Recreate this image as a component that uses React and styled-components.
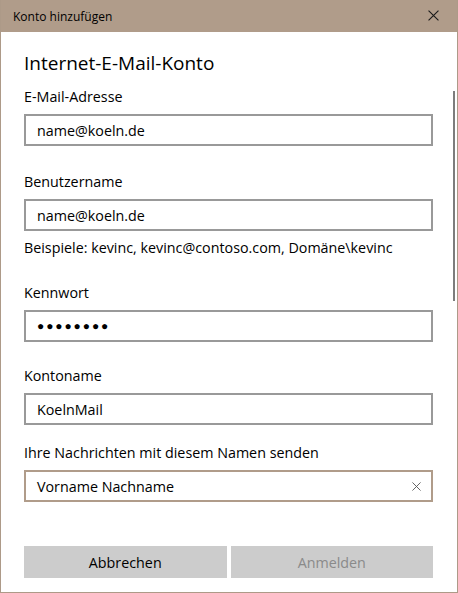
import styled, { createGlobalStyle } from "styled-components";

const GlobalStyle = createGlobalStyle`
	* {
		box-sizing: border-box;
	}
	body {
		margin: 0;
		background: #ffffff;
		font-family: "Open Sans", "Noto Sans", sans-serif;
	}
`;

const Window = styled.div`
	position: relative;
	width: 458px;
	height: 593px;
	display: flex;
	flex-direction: column;
	border: 1px solid #ad9a88;
	border-top: none;
	background: #ffffff;
	overflow: hidden;
`;

const TitleBar = styled.div`
	height: 32px;
	margin: 0 -1px;
	padding: 0 18px 0 13px;
	display: flex;
	align-items: center;
	justify-content: space-between;
	background: #b09c8a;
	color: #000000;
	font-size: 12px;
`;

const CloseButton = styled.button`
	border: none;
	background: transparent;
	padding: 0;
	width: 12px;
	height: 12px;
	display: flex;
	cursor: pointer;
`;

const Content = styled.div`
	flex: 1;
	display: flex;
	flex-direction: column;
	padding: 17px 24px 0 23px;
`;

const Heading = styled.h1`
	margin: 0;
	font-size: 19px;
	line-height: 28px;
	font-weight: 400;
	color: #000000;
`;

const Field = styled.div`
	display: flex;
	flex-direction: column;
	margin-top: ${({ $top }) => $top}px;
`;

const Label = styled.label`
	font-size: 14.3px;
	line-height: 20px;
	color: #000000;
	margin-bottom: 7px;
`;

const InputBox = styled.div`
	height: 32px;
	display: flex;
	align-items: center;
	padding: 0 10px 0 11px;
	border: 2px solid ${({ $focused }) => ($focused ? "#b09c8a" : "#999999")};
	font-size: 14.3px;
	color: #000000;
`;

const Value = styled.span`
	flex: 1;
	white-space: nowrap;
`;

const Dots = styled.span`
	flex: 1;
	font-size: 12px;
	letter-spacing: 1.9px;
	line-height: 1;
`;

const Hint = styled.div`
	margin-top: 7px;
	font-size: 14.3px;
	line-height: 20px;
	color: #000000;
`;

const Buttons = styled.div`
	margin-top: auto;
	margin-bottom: 14px;
	display: grid;
	grid-template-columns: 1fr 1fr;
	gap: 4px;
`;

const Button = styled.button`
	height: 32px;
	border: none;
	background: #cccccc;
	font-family: inherit;
	font-size: 14.3px;
	color: ${({ disabled }) => (disabled ? "#8a8a8a" : "#000000")};
	cursor: ${({ disabled }) => (disabled ? "default" : "pointer")};
`;

const ScrollThumb = styled.div`
	position: absolute;
	left: 452px;
	top: 91px;
	width: 2px;
	height: 210px;
	background: #7d7d7d;
`;

const XIcon = ({ size, color, width }) => (
	<svg width={size} height={size} viewBox="0 0 10 10" fill="none">
		<path d="M0.5 0.5 L9.5 9.5 M9.5 0.5 L0.5 9.5" stroke={color} strokeWidth={width} />
	</svg>
);

const fields = [
	{ label: "E-Mail-Adresse", value: "name@koeln.de", top: 10 },
	{ label: "Benutzername", value: "name@koeln.de", top: 26, hint: "Beispiele: kevinc, kevinc@contoso.com, Domäne\\kevinc" },
	{ label: "Kennwort", password: 8, top: 25 },
	{ label: "Kontoname", value: "KoelnMail", top: 24 },
	{ label: "Ihre Nachrichten mit diesem Namen senden", value: "Vorname Nachname", top: 18, focused: true },
];

const App = () => {
	return (
		<>
			<GlobalStyle />
			<Window>
				<TitleBar>
					<span>Konto hinzufügen</span>
					<CloseButton aria-label="Schließen">
						<XIcon size={11} color="#1a1a1a" width={1} />
					</CloseButton>
				</TitleBar>
				<Content>
					<Heading>Internet-E-Mail-Konto</Heading>
					{fields.map((f) => (
						<Field key={f.label} $top={f.top}>
							<Label>{f.label}</Label>
							<InputBox $focused={f.focused}>
								{f.password ? (
									<Dots>{"●".repeat(f.password)}</Dots>
								) : (
									<Value>{f.value}</Value>
								)}
								{f.focused && <XIcon size={9} color="#555555" width={1} />}
							</InputBox>
							{f.hint && <Hint>{f.hint}</Hint>}
						</Field>
					))}
					<Buttons>
						<Button>Abbrechen</Button>
						<Button disabled>Anmelden</Button>
					</Buttons>
				</Content>
				<ScrollThumb />
			</Window>
		</>
	);
};

export default App;
